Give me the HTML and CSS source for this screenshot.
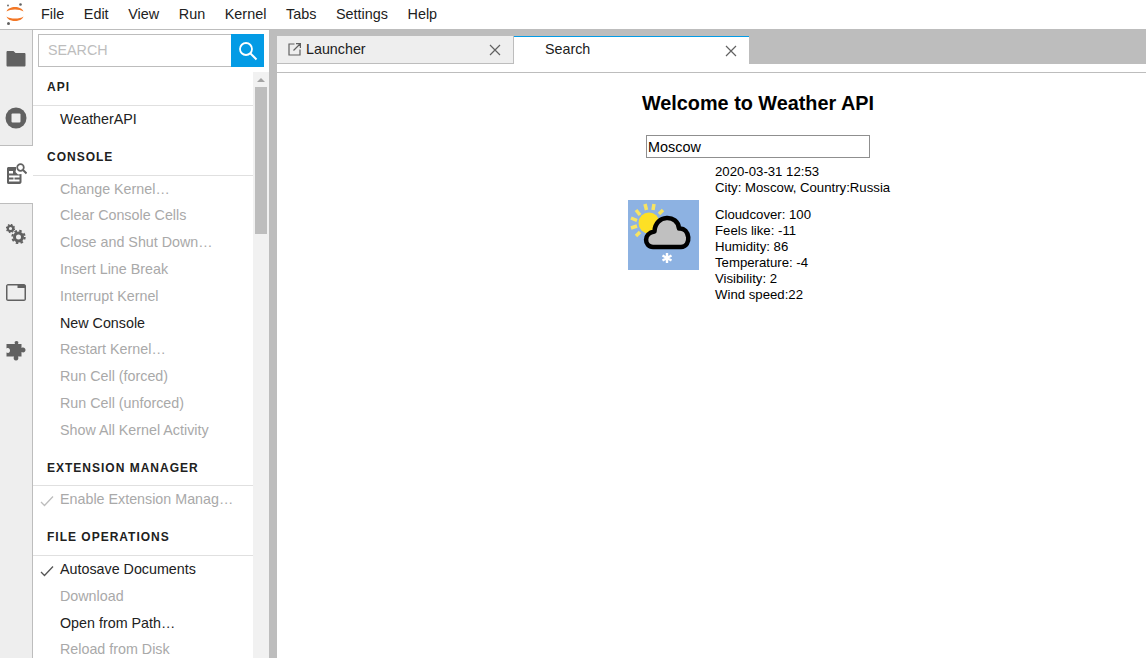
FILE: index.html
```html
<!DOCTYPE html>
<html lang="en">
<head>
    <meta charset="UTF-8">
    <title>JupyterLab</title>
    <link rel="stylesheet" href="styles.css">
</head>
<body>
    <header class="topBar">
        <svg class="logo" width="18" height="24" viewBox="0 0 18 24">
            <path d="M0.500 9.500C2.500 3.500 15.500 3.500 17.500 9.500C14 6.800 4 6.800 0.500 9.500Z" fill="#f37726"/>
            <path d="M0.500 14.500C2.500 20.500 15.500 20.500 17.500 14.500C14 17.200 4 17.200 0.500 14.500Z" fill="#f37726"/>
            <circle cx="14.500" cy="2.500" r="1.300" fill="#616161"/>
            <circle cx="2" cy="3.500" r="0.900" fill="#616161"/>
            <circle cx="2.500" cy="21.500" r="1.500" fill="#616161"/>
        </svg>
        <nav class="menu">
            <span>File</span><span>Edit</span><span>View</span><span>Run</span><span>Kernel</span><span>Tabs</span><span>Settings</span><span>Help</span>
        </nav>
    </header>
    <div class="workspace">
        <aside class="iconStrip">
            <div class="stripItem stripFolder">
                <svg width="20" height="20" viewBox="0 0 20 20"><path d="M0.500 3C0.500 2.500 1 2 1.500 2H7.500L9.500 4H18.500C19 4 19.500 4.500 19.500 5V16.500C19.500 17 19 17.500 18.500 17.500H1.500C1 17.500 0.500 17 0.500 16.500Z" fill="#616161"/></svg>
            </div>
            <div class="stripItem stripStop">
                <svg width="22" height="22" viewBox="0 0 22 22"><circle cx="11" cy="11" r="10.500" fill="#616161"/><rect x="6.500" y="6.500" width="9" height="9" rx="1" fill="#eee"/></svg>
            </div>
            <div class="stripItem stripActive">
                <svg class="kernelIcon" width="20" height="22" viewBox="0 0 20 22">
                    <path d="M1.500 4H9V6.500L8.500 9L11 11.500L14.500 11V19C14.500 20 13.500 21 12.500 21H1.500C0.700 21 0 20.300 0 19.500V5.500C0 4.700 0.700 4 1.500 4Z" fill="#616161"/>
                    <path d="M2 8H6V10.500H2ZM2 12.500H12.500V14.500H2ZM2 16.500H12.500V18.500H2ZM6.500 14.500H7.500V18.500H6.500Z" fill="#fff"/>
                    <circle cx="13.500" cy="4.500" r="3.300" fill="none" stroke="#616161" stroke-width="1.700"/>
                    <path d="M16 7L19.500 10.500" stroke="#616161" stroke-width="2"/>
                </svg>
            </div>
            <div class="stripItem stripGear">
                <svg width="20" height="20" viewBox="0 0 20 20">
                    <circle cx="4.500" cy="4.500" r="2.700" fill="none" stroke="#616161" stroke-width="2.200"/>
                    <circle cx="4.500" cy="4.500" r="4" fill="none" stroke="#616161" stroke-width="1.300" stroke-dasharray="1.500 1.640"/>
                    <circle cx="12.500" cy="13" r="4" fill="none" stroke="#616161" stroke-width="3"/>
                    <circle cx="12.500" cy="13" r="6.200" fill="none" stroke="#616161" stroke-width="2" stroke-dasharray="2.500 2.370"/>
                </svg>
            </div>
            <div class="stripItem">
                <svg width="20" height="17" viewBox="0 0 20 17"><path d="M2 0H18C19 0 20 1 20 2V15C20 16 19 17 18 17H2C1 17 0 16 0 15V2C0 1 1 0 2 0ZM1.500 4V15.500H18.500V4H11.500V1.500H1.500Z" fill="#616161" fill-rule="evenodd"/></svg>
            </div>
            <div class="stripItem">
                <svg width="20" height="20" viewBox="0 0 20 20"><path d="M6.500 3H9C8 1 9 0 10.500 0S13 1 12 3H15.500V7C17.500 6 19.500 7 19.500 9S17.500 12 15.500 11V15.500H12C13 17.500 12 19.500 10 19.500S7 17.500 8 15.500H0.500V11.500C2.500 12.500 4 11.500 4 9.500S2.500 6.500 0.500 7.500V3Z" fill="#616161"/></svg>
            </div>
        </aside>
        <section class="palette">
            <div class="searchRow">
                <div class="searchInput">SEARCH</div>
                <div class="searchButton">
                    <svg width="20" height="20" viewBox="0 0 20 20"><circle cx="8" cy="8" r="6" fill="none" stroke="#fff" stroke-width="1.800"/><path d="M12.500 12.500L18.500 18.500" stroke="#fff" stroke-width="2"/></svg>
                </div>
            </div>
            <div class="paletteBody">
                <div class="commandList">
                    <h3 class="groupHead groupFirst">API</h3>
                    <div class="cmd">WeatherAPI</div>

                    <h3 class="groupHead">CONSOLE</h3>
                    <div class="cmd off">Change Kernel…</div>
                    <div class="cmd off">Clear Console Cells</div>
                    <div class="cmd off">Close and Shut Down…</div>
                    <div class="cmd off">Insert Line Break</div>
                    <div class="cmd off">Interrupt Kernel</div>
                    <div class="cmd">New Console</div>
                    <div class="cmd off">Restart Kernel…</div>
                    <div class="cmd off">Run Cell (forced)</div>
                    <div class="cmd off">Run Cell (unforced)</div>
                    <div class="cmd off">Show All Kernel Activity</div>

                    <h3 class="groupHead">EXTENSION MANAGER</h3>
                    <div class="cmd off">
                        <svg class="tick" width="14" height="12" viewBox="0 0 14 12"><path d="M1 7L4.500 10.500L13 1.500" fill="none" stroke="#bdbdbd" stroke-width="1.300"/></svg>
                        Enable Extension Manag…
                    </div>

                    <h3 class="groupHead">FILE OPERATIONS</h3>
                    <div class="cmd">
                        <svg class="tick" width="14" height="12" viewBox="0 0 14 12"><path d="M1 7L4.500 10.500L13 1.500" fill="none" stroke="#555" stroke-width="1.300"/></svg>
                        Autosave Documents
                    </div>
                    <div class="cmd off">Download</div>
                    <div class="cmd">Open from Path…</div>
                    <div class="cmd off">Reload from Disk</div>
                </div>
                <div class="scrollTrack">
                    <div class="scrollArrow"></div>
                    <div class="scrollThumb"></div>
                </div>
            </div>
        </section>
        <div class="splitter"></div>
        <main class="mainArea">
            <div class="tabBar">
                <div class="tab">
                    <svg class="tabIcon" width="13" height="13" viewBox="0 0 13 13"><path d="M6.500 1H1V12H12V6.500M5.500 7.500L12 1M8 0.600H12.400V5" fill="none" stroke="#616161" stroke-width="1.200"/></svg>
                    <span class="tabLabel">Launcher</span>
                    <svg class="tabClose" width="12" height="12" viewBox="0 0 12 12"><path d="M1 1L11 11M11 1L1 11" stroke="#616161" stroke-width="1.200"/></svg>
                </div>
                <div class="tab tabCurrent">
                    <span class="tabLabel">Search</span>
                    <svg class="tabClose" width="12" height="12" viewBox="0 0 12 12"><path d="M1 1L11 11M11 1L1 11" stroke="#616161" stroke-width="1.200"/></svg>
                </div>
            </div>
            <div class="tabRule"></div>
            <div class="weather">
                <h2 class="weatherTitle">Welcome to Weather API</h2>
                <input class="cityInput" type="text" value="Moscow">
                <div class="report">
                    <svg class="weatherPic" width="71" height="70" viewBox="0 0 71 70">
                        <rect width="71" height="70" fill="#8db2e2"/>
                        <path d="M8 10L12 15M17 4L18.500 10M26 4L25 10M35 10L31 14M3 18L9 20.500M3 28L9 26M8 36L12 32" stroke="#f7e463" stroke-width="3.500"/>
                        <circle cx="21" cy="23" r="10.500" fill="#fde025"/>
                        <path d="M25 47C16 47 15 33 26.500 31.500C27 14 50 14 51 28.500C62 27 64 47 53 47Z" fill="#c0c0c0" stroke="#000" stroke-width="4.500" stroke-linejoin="round"/>
                        <path d="M39 53V63M34.500 55.500L43.500 60.500M43.500 55.500L34.500 60.500" stroke="#fff" stroke-width="2.400"/>
                    </svg>
                    <div class="reportText">
                        <div class="stamp">2020-03-31 12:53<br>City: Moscow, Country:Russia</div>
                        <div class="stats">
                            <div>Cloudcover: 100</div>
                            <div>Feels like: -11</div>
                            <div>Humidity: 86</div>
                            <div>Temperature: -4</div>
                            <div>Visibility: 2</div>
                            <div>Wind speed:22</div>
                        </div>
                    </div>
                </div>
            </div>
        </main>
    </div>
</body>
</html>
```

FILE: styles.css
```css
html, body {
    margin: 0;
    height: 100%;
    overflow: hidden;
    font-family: "Liberation Sans", Arial, sans-serif;
    background-color: #fff;
}

.topBar {
    display: flex;
    height: 29px;
    border-bottom: 1px solid #bdbdbd;
}
.logo {
    flex: none;
    margin: 2px 0 0 6px;
}
.menu {
    display: flex;
    margin-left: 17px;
    gap: 19.6px;
    font-size: 14.4px;
    line-height: 28px;
    color: #212121;
}

.workspace {
    display: flex;
    height: 628px;
}

.iconStrip {
    width: 32px;
    flex: none;
    background-color: #eee;
    border-right: 1px solid #bdbdbd;
}
.stripItem {
    display: flex;
    align-items: center;
    justify-content: center;
    height: 58.4px;
}
.stripFolder svg {
    margin-bottom: 1px;
}
.stripStop {
    height: 57px;
}
.stripStop svg {
    margin-top: 2px;
}
.stripActive {
    height: 59px;
    background-color: #fff;
    margin-right: -1px;
    border-top: 1px solid #bdbdbd;
    border-bottom: 1px solid #bdbdbd;
    box-sizing: border-box;
}
.kernelIcon {
    margin-bottom: 2px;
}
.stripGear {
    height: 59.4px;
}

.palette {
    width: 236px;
    flex: none;
    display: flex;
    flex-direction: column;
    overflow: hidden;
}
.searchRow {
    display: flex;
    margin: 4px 5px 0;
    height: 33px;
}
.searchInput {
    flex: 1;
    border: 1px solid #bdbdbd;
    border-right: none;
    color: #bdbdbd;
    font-size: 14.3px;
    line-height: 31px;
    padding-left: 9px;
}
.searchButton {
    width: 33px;
    background-color: #039be5;
    display: flex;
    align-items: center;
    justify-content: center;
}
.paletteBody {
    display: flex;
    flex: 1;
    min-height: 0;
    margin-top: 5px;
}
.commandList {
    flex: 1;
}
.groupHead {
    margin: 0;
    height: 42.8px;
    padding: 17.2px 0 0 14px;
    box-sizing: border-box;
    font-size: 12px;
    font-weight: bold;
    letter-spacing: 1px;
    line-height: 14px;
    color: #212121;
    border-bottom: 1px solid #e0e0e0;
}
.groupFirst {
    padding-top: 8px;
    height: 34px;
}
.cmd {
    position: relative;
    height: 26.8px;
    line-height: 26px;
    padding-left: 27px;
    font-size: 14.3px;
    color: #212121;
}
.cmd.off {
    color: #a9a9a9;
}
.tick {
    position: absolute;
    left: 7px;
    top: 9px;
}

.scrollTrack {
    width: 16px;
    flex: none;
    background-color: #f1f1f1;
}
.scrollArrow {
    width: 0;
    height: 0;
    margin: 6px auto 5px;
    border-left: 4px solid transparent;
    border-right: 4px solid transparent;
    border-bottom: 4px solid #a3a3a3;
}
.scrollThumb {
    height: 147px;
    margin: 0 2px;
    background-color: #bdbdbd;
}

.splitter {
    width: 8px;
    flex: none;
    background-color: #bdbdbd;
}

.mainArea {
    flex: 1;
    min-width: 0;
}
.tabBar {
    display: flex;
    height: 28px;
    padding-top: 6px;
    background-color: #bdbdbd;
}
.tab {
    display: flex;
    align-items: center;
    width: 236px;
    box-sizing: border-box;
    background-color: #eee;
    border-bottom: 1px solid #bdbdbd;
    padding: 0 12px 0 11px;
    font-size: 14.3px;
    color: #212121;
}
.tabIcon {
    margin-right: 5px;
}
.tabLabel {
    flex: 1;
    margin-bottom: 2px;
}
.tabCurrent {
    width: 235px;
    background-color: #fff;
    border-top: 1px solid #039be5;
    border-bottom: none;
    margin-left: 1px;
    padding: 0 12px 0 31px;
}
.tabCurrent .tabLabel {
    margin-bottom: 3px;
}
.tabRule {
    height: 8px;
    border-bottom: 1px solid #bdbdbd;
}

.weather {
    display: flex;
    flex-direction: column;
    align-items: center;
    padding-left: 93px;
    font-size: 13.2px;
    line-height: 16px;
    color: #000;
}
.weatherTitle {
    margin: 18px 0 0 0;
    font-size: 19.84px;
    line-height: 24px;
}
.cityInput {
    width: 224px;
    height: 23px;
    box-sizing: border-box;
    margin-top: 20px;
    padding: 0 1px;
    border: 1px solid #8f8f8f;
    font: 14.4px "Liberation Sans", Arial, sans-serif;
    color: #000;
    outline: none;
}
.report {
    display: flex;
    align-items: flex-start;
    width: 262px;
    margin: 6px 0 0 2px;
    gap: 16px;
}
.weatherPic {
    flex: none;
    margin-top: 36px;
}
.reportText {
    white-space: nowrap;
}
.stats {
    margin-top: 11px;
}
```
